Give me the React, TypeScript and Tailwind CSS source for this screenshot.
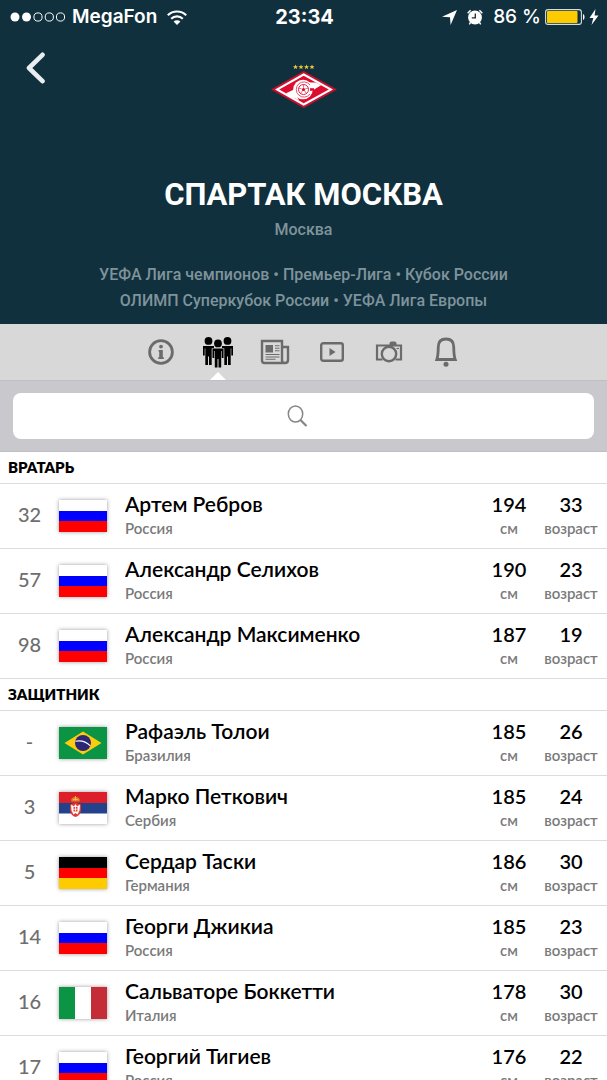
import type { ReactNode } from "react";

type Country = "Россия" | "Бразилия" | "Сербия" | "Германия" | "Италия";

type Player = {
  number: string;
  name: string;
  country: Country;
  height: number;
  age: number;
};

const squad: { position: string; players: Player[] }[] = [
  {
    position: "Вратарь",
    players: [
      { number: "32", name: "Артем Ребров", country: "Россия", height: 194, age: 33 },
      { number: "57", name: "Александр Селихов", country: "Россия", height: 190, age: 23 },
      { number: "98", name: "Александр Максименко", country: "Россия", height: 187, age: 19 },
    ],
  },
  {
    position: "Защитник",
    players: [
      { number: "-", name: "Рафаэль Толои", country: "Бразилия", height: 185, age: 26 },
      { number: "3", name: "Марко Петкович", country: "Сербия", height: 185, age: 24 },
      { number: "5", name: "Сердар Таски", country: "Германия", height: 186, age: 30 },
      { number: "14", name: "Георги Джикиа", country: "Россия", height: 185, age: 23 },
      { number: "16", name: "Сальваторе Боккетти", country: "Италия", height: 178, age: 30 },
      { number: "17", name: "Георгий Тигиев", country: "Россия", height: 176, age: 22 },
    ],
  },
];

const flags: Record<Country, ReactNode> = {
  Россия: (
    <>
      <rect width="48" height="32" fill="#fff" />
      <rect y="11" width="48" height="11" fill="#0000fe" />
      <rect y="21" width="48" height="11" fill="#fe0000" />
    </>
  ),
  Бразилия: (
    <>
      <rect width="48" height="32" fill="#0a9444" />
      <path d="M5.500 16 24 4.500 42.500 16 24 27.500z" fill="#fecb10" />
      <circle cx="24" cy="16" r="8" fill="#2c2677" />
      <path d="M16.400 14.200c5-1 11 .6 15 4.600" fill="none" stroke="#fff" strokeWidth="1.100" />
    </>
  ),
  Сербия: (
    <>
      <rect width="48" height="32" fill="#fff" />
      <rect width="48" height="11" fill="#dd1f2c" />
      <rect y="11" width="48" height="10.500" fill="#24418c" />
      <path d="M11 12.500q5.500-3 11 0v5q0 6-5.500 7.500-5.500-1.500-5.500-7.500z" fill="#e33b35" />
      <path d="M12 12.500l3 2 1.500-2.500 1.500 2.500 3-2-.5 6-2 4-2-1.500-2 1.500-2-4z" fill="#fff" />
      <rect x="14.500" y="15" width="4" height="4.500" fill="#e33b35" />
      <path d="M16.500 15v4.500M14.500 17.200h4" stroke="#fff" strokeWidth=".8" />
      <path d="M12.500 9.500c-1-3 1-4.500 4-4.500s5 1.500 4 4.500z" fill="#d9822b" />
      <path d="M16.500 4v4.500M14 7.500h5" stroke="#f4c04a" strokeWidth=".9" />
    </>
  ),
  Германия: (
    <>
      <rect width="48" height="11" fill="#000" />
      <rect y="11" width="48" height="10.500" fill="#fe0000" />
      <rect y="21" width="48" height="11" fill="#fecb00" />
    </>
  ),
  Италия: (
    <>
      <rect width="48" height="32" fill="#fff" />
      <rect width="16" height="32" fill="#0a9444" />
      <rect x="32" width="16" height="32" fill="#c42c37" />
    </>
  ),
};

const Person = ({ x, y }: { x: number; y: number }) => (
  <g transform={`translate(${x} ${y})`}>
    <circle cx="5.500" cy="3.900" r="3.900" />
    <path d="M0 9h11v9.500H9.300v-7h-.6V28H6v-8.500H5V28H2.300V11.500h-.6v7H0z" />
  </g>
);

const tabs: { label: string; icon: ReactNode }[] = [
  {
    label: "Информация",
    icon: (
      <svg viewBox="0 0 26 26" className="size-[26px]">
        <circle cx="13" cy="13" r="11.400" fill="none" stroke="currentColor" strokeWidth="2.800" />
        <circle cx="13" cy="7.600" r="1.900" fill="currentColor" />
        <path d="M10.600 11h4.200v7.300h1v1.700h-5.600v-1.700h1v-5.600h-.6z" fill="currentColor" />
      </svg>
    ),
  },
  {
    label: "Состав",
    icon: (
      <svg viewBox="0 0 32 32" className="size-8" fill="currentColor">
        <Person x={1} y={1} />
        <Person x={20} y={1} />
        <g stroke="#d8d8d8" strokeWidth="1" paintOrder="stroke">
          <Person x={10.5} y={3.5} />
        </g>
      </svg>
    ),
  },
  {
    label: "Новости",
    icon: (
      <svg viewBox="0 0 30 26" className="h-[26px] w-[30px]" fill="none" stroke="currentColor">
        <path
          d="M22 22V2H2v19.500Q2 24 4.500 24h20.500q3 0 3-3V8h-6v13q0 3 2.500 3"
          strokeWidth="2.400"
        />
        <rect x="5.500" y="6" width="7.500" height="7.500" fill="currentColor" stroke="none" />
        <path d="M15 6.700h4.500M15 9.200h4.500M15 11.700h4.500M5.500 15.500h14M5.500 18h14M5.500 20.300h10" strokeWidth="1.100" />
      </svg>
    ),
  },
  {
    label: "Видео",
    icon: (
      <svg viewBox="0 0 24 20" className="h-5 w-6">
        <rect x="1.200" y="1.200" width="21.600" height="17.600" rx="2" fill="none" stroke="currentColor" strokeWidth="2.400" />
        <path d="M9.500 6v8l6-4z" fill="currentColor" />
      </svg>
    ),
  },
  {
    label: "Фото",
    icon: (
      <svg viewBox="0 0 28 24" className="h-6 w-7" fill="none" stroke="currentColor">
        <path d="M7.500 19.500H2V5.500h24v14h-5.500" strokeWidth="2.200" />
        <path d="M14.500 5.500V3.500q0-2 2-2h3q2 0 2 2v2z" fill="currentColor" stroke="none" />
        <circle cx="14" cy="14" r="7.200" strokeWidth="2.400" />
        <path d="M21.500 8.500H24" strokeWidth="1.200" />
      </svg>
    ),
  },
  {
    label: "Уведомления",
    icon: (
      <svg viewBox="0 0 22 30" className="h-[30px] w-[22px]">
        <path
          d="M1.800 22.500C3.200 19 3.200 15 3.300 9.500 3.400 4 6.500 2 11 2s7.600 2 7.700 7.500c.1 5.500.1 9.500 1.500 13z"
          fill="none"
          stroke="currentColor"
          strokeWidth="2.800"
        />
        <circle cx="11" cy="27.300" r="2.500" fill="currentColor" />
      </svg>
    ),
  },
];

const StatusBar = () => (
  <div className="grid h-8 grid-cols-[1fr_auto_1fr] items-center pl-2.5 pr-2 pt-0.5 font-['Inter',sans-serif] text-[19px]">
    <div className="flex items-center">
      <svg viewBox="0 0 56 10" className="h-2.5 w-14 shrink-0" fill="none" stroke="#fff">
        <circle cx="5" cy="5" r="4.500" fill="#fff" stroke="none" />
        <circle cx="16.500" cy="5" r="4.500" fill="#fff" stroke="none" />
        <circle cx="28" cy="5" r="4.100" />
        <circle cx="39.300" cy="5" r="4.100" />
        <circle cx="50.500" cy="5" r="4.100" />
      </svg>
      <span className="ml-1.5 mr-2.5 font-semibold">MegaFon</span>
      <svg viewBox="0 0 20 15" className="h-[15px] w-5 shrink-0" fill="none" stroke="#fff" strokeWidth="2.200">
        <path d="M.8 5.300a13 13 0 0 1 18.400 0" />
        <path d="M4.200 8.700a8.200 8.200 0 0 1 11.600 0" />
        <path d="M10 15 6.600 11.600a4.800 4.800 0 0 1 6.800 0z" fill="#fff" stroke="none" />
      </svg>
    </div>
    <span className="text-xl font-bold">23:34</span>
    <div className="flex items-center justify-end">
      <svg viewBox="0 0 15 15" className="mr-2.5 size-[15px]" fill="#fff">
        <path d="M15 0 8.600 15 8 7.200 0 6.800z" />
      </svg>
      <svg viewBox="0 0 16 16" className="mr-2.5 size-4">
        <circle cx="8" cy="8.500" r="6.900" fill="#fff" />
        <path d="M.7 4.200 3.600 1.300M15.300 4.200 12.400 1.300" stroke="#fff" strokeWidth="1.500" />
        <path d="M3.500 13.500 2.300 15.300M12.500 13.500l1.200 1.800" stroke="#fff" strokeWidth="1.400" />
        <path d="M8.300 4.500v4.300H4.800" fill="none" stroke="#10303d" strokeWidth="1.300" />
      </svg>
      <span className="whitespace-nowrap font-medium">86 %</span>
      <svg viewBox="0 0 40 16" className="ml-1 h-4 w-10">
        <rect x=".6" y=".6" width="35.800" height="14.800" rx="2.500" fill="none" stroke="#d5dde0" strokeWidth="1.100" />
        <rect x="2" y="2" width="30.500" height="12" rx="1" fill="#fecb00" />
        <path d="M38 5c2 .6 2 5.400 0 6z" fill="#fff" />
      </svg>
      <svg viewBox="0 0 10 16" className="ml-1 h-4 w-2.5" fill="#fff">
        <path d="M6.500 0 .5 9h3.800L2.500 16l7-9.500H5.600z" />
      </svg>
    </div>
  </div>
);

const Crest = () => (
  <svg viewBox="0 0 66 44" className="h-11 w-[66px]" role="img" aria-label="Спартак">
    <g fill="#f3c93b">
      {[24.5, 30, 35.5, 41].map((x) => (
        <path key={x} transform={`translate(${x} 3)`} d="M0-2.600.7-.8 2.500-.8 1.100.4 1.600 2.200 0 1.100-1.600 2.200-1.100.4-2.500-.8-.7-.8z" />
      ))}
    </g>
    <path d="M0 25.500 32.700 7 66 25.500 32.700 44z" fill="#c8102e" />
    <path d="M4 25.500 32.700 9.300 62 25.500 32.700 41.700z" fill="#fff" />
    <path d="M8.200 25.500 32.700 11.700 57.800 25.500 32.700 39.300z" fill="#dc0d2f" />
    <path d="M15 29.200l8-3.700 5 10.900-4.600-2.500-3.600-.4zM37 18.500l8 .1 5 2.600-10.500 6.600z" fill="#fff" />
    <circle cx="32" cy="25.500" r="9.800" fill="#fff" />
    <path d="M39 21a7.600 7.600 0 1 0 0 9" fill="none" stroke="#dc0d2f" strokeWidth=".7" />
    <circle cx="32.500" cy="25.500" r="5" fill="#fff" stroke="#dc0d2f" strokeWidth=".9" />
    <path d="M32.500 23.700l1.700 1.200-.6 2h-2.200l-.6-2z" fill="#dc0d2f" />
    <path d="M32.500 20.500v3.200M27.700 24l3 .9M37.300 24l-3 .9M29.600 29.600l1.800-2.700M35.400 29.600l-1.800-2.700" stroke="#dc0d2f" strokeWidth=".6" />
    <path d="M39 24.200h4v2.600h-4z" fill="#dc0d2f" />
  </svg>
);

const Header = () => (
  <header className="shrink-0 bg-[#10303d] pb-2.5 text-center font-['Roboto',sans-serif] text-white">
    <StatusBar />
    <div className="grid grid-cols-[1fr_auto_1fr] items-start px-5 pt-4">
      <button type="button" aria-label="Назад" className="flex h-10 w-8 items-center justify-center justify-self-start">
        <svg viewBox="0 0 20 32" className="h-8 w-5" fill="none" stroke="#e8eef1" strokeWidth="4.600" strokeLinecap="round" strokeLinejoin="round">
          <path d="M16.500 2.800 3 16l13.500 13.200" />
        </svg>
      </button>
      <div className="pt-4">
        <Crest />
      </div>
    </div>
    <h1 className="mt-16 text-[31px] font-bold leading-[46px]">СПАРТАК МОСКВА</h1>
    <p className="text-base font-medium leading-6 text-[#7f939b]">Москва</p>
    <p className="mt-5 px-16 text-base font-medium leading-[26px] text-[#7f939b]">
      УЕФА Лига чемпионов • Премьер-Лига • Кубок России
      <br />
      ОЛИМП Суперкубок России • УЕФА Лига Европы
    </p>
  </header>
);

const TabBar = () => (
  <nav className="flex h-[57px] shrink-0 justify-center border-b border-[#bfbfc4] bg-[#d8d8d8]">
    {tabs.map((tab) => {
      const active = tab.label === "Состав";
      return (
        <button
          key={tab.label}
          type="button"
          aria-label={tab.label}
          className={`relative flex w-[57px] items-center justify-center ${active ? "text-black" : "text-[#6b6b6b]"}`}
        >
          {tab.icon}
          {active && (
            <svg viewBox="0 0 16 8" className="absolute bottom-0 h-2 w-4" fill="#fff">
              <path d="M0 8 8 0l8 8z" />
            </svg>
          )}
        </button>
      );
    })}
  </nav>
);

const SearchBar = () => (
  <div className="shrink-0 border-b border-[#bebec3] bg-[#c9c8cd] px-[13px] py-3">
    <div className="relative">
      <input type="search" aria-label="Поиск" className="block h-[46px] w-full rounded-lg bg-white px-4 text-lg outline-none" />
      <svg
        viewBox="0 0 22 22"
        className="pointer-events-none absolute inset-0 m-auto size-[22px] -translate-x-1.5"
        fill="none"
        stroke="#858585"
      >
        <ellipse cx="8.500" cy="9" rx="7.200" ry="8" strokeWidth="1.500" />
        <path d="M13.500 15 19.500 21" strokeWidth="2.200" />
      </svg>
    </div>
  </div>
);

const Stat = ({ value, unit }: { value: number; unit: string }) => (
  <div className="flex w-14 flex-col items-center">
    <span className="text-xl font-semibold leading-6 text-black">{value}</span>
    <span className="text-[15px] font-semibold leading-6 text-[#7a7a7a]">{unit}</span>
  </div>
);

const PlayerRow = ({ player }: { player: Player }) => (
  <li className="flex h-[65px] items-center border-b border-[#dcdcdc] pr-2">
    <span className="w-[59px] pb-1 text-center text-xl font-medium text-[#6e6e6e]">{player.number}</span>
    <svg viewBox="0 0 48 32" className="h-8 w-12 shrink-0 shadow-[0_0_4px_rgba(0,0,0,0.4)]" role="img" aria-label={player.country}>
      {flags[player.country]}
    </svg>
    <div className="ml-[18px] flex min-w-0 flex-1 flex-col">
      <span className="truncate text-[21px] font-semibold leading-6 text-black">{player.name}</span>
      <span className="text-[15px] font-semibold leading-6 text-[#7a7a7a]">{player.country}</span>
    </div>
    <div className="flex gap-1.5">
      <Stat value={player.height} unit="см" />
      <Stat value={player.age} unit="возраст" />
    </div>
  </li>
);

const App = () => (
  <div className="flex h-screen flex-col overflow-hidden bg-white font-['Lato',sans-serif]">
    <Header />
    <TabBar />
    <SearchBar />
    <main className="min-h-0 flex-1 overflow-y-auto [scrollbar-width:none]">
      {squad.map((group) => (
        <section key={group.position}>
          <h2 className="border-b border-[#dcdcdc] px-2 text-[15px] font-extrabold uppercase leading-[31px] text-black">
            {group.position}
          </h2>
          <ul>
            {group.players.map((player) => (
              <PlayerRow key={player.name} player={player} />
            ))}
          </ul>
        </section>
      ))}
    </main>
  </div>
);

export default App;
